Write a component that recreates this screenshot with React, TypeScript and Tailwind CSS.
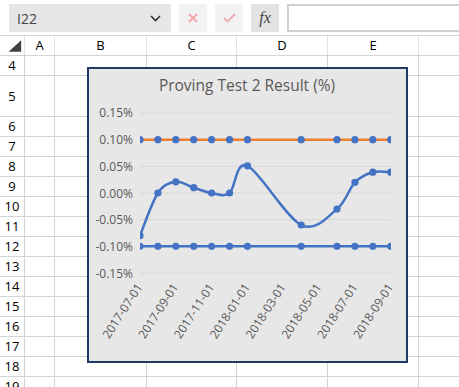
import React from 'react';

const cols = ['', 'A', 'B', 'C', 'D', 'E', ''];
const colW = ['w-[25px]', 'w-[30px]', 'w-[92px]', 'w-[90px]', 'w-[91px]', 'w-[91px]', 'w-[60px]'];
const rows = [4, 5, 6, 7, 8, 9, 10, 11, 12, 13, 14, 15, 16, 17, 18, 19];

// chart coordinates are in page pixels (viewBox is offset to the chart's inner box)
const x0 = 140;
const step = 17.91;
const yOf = (v: number) => 193 - (v / 0.05) * 26.67;
const xOf = (i: number) => x0 + i * step;

const idx = [0, 1, 2, 3, 4, 5, 6, 9, 11, 12, 13, 14];
const vals = [-0.08, 0, 0.021, 0.01, 0, 0, 0.051, -0.06, -0.03, 0.02, 0.039, 0.039];
const pts: [number, number][] = idx.map((i, k) => [xOf(i), yOf(vals[k])]);

const ticks = [0.15, 0.1, 0.05, 0, -0.05, -0.1, -0.15];
const labels = ['2017-07-01', '2017-09-01', '2017-11-01', '2018-01-01', '2018-03-01', '2018-05-01', '2018-07-01', '2018-09-01'];

function smooth(p: [number, number][]) {
  let d = `M${p[0][0]},${p[0][1]}`;
  for (let i = 0; i < p.length - 1; i++) {
    const a = p[i - 1] || p[i];
    const b = p[i];
    const c = p[i + 1];
    const e = p[i + 2] || c;
    const c1x = b[0] + (c[0] - a[0]) / 6;
    const c1y = b[1] + (c[1] - a[1]) / 6;
    const c2x = c[0] - (e[0] - b[0]) / 6;
    const c2y = c[1] - (e[1] - b[1]) / 6;
    d += ` C${c1x},${c1y} ${c2x},${c2y} ${c[0]},${c[1]}`;
  }
  return d;
}

function Chart() {
  const font = '"Open Sans", "Noto Sans", sans-serif';
  return (
    <div className="absolute left-[87px] top-[67px] w-[321px] h-[296px] border-2 border-[#1f3864] bg-[#e7e7e7]">
      <svg width="317" height="292" viewBox="89 69 317 292" style={{ fontFamily: font }}>
        <defs>
          <clipPath id="plot">
            <rect x="140" y="100" width="251" height="190" />
          </clipPath>
        </defs>
        <text x="247" y="91" textAnchor="middle" fontSize="15.5" fill="#595959">
          Proving Test 2 Result (%)
        </text>
        {ticks.map((t) => (
          <g key={t}>
            <line x1="140" x2="391" y1={yOf(t)} y2={yOf(t)} stroke="#d6d6d6" strokeWidth="1" />
            <text x="133" y={yOf(t) + 4.5} textAnchor="end" fontSize="12" fill="#595959">
              {`${t.toFixed(2)}%`}
            </text>
          </g>
        ))}
        <g clipPath="url(#plot)">
          <line x1="140" x2="391" y1={yOf(0.1)} y2={yOf(0.1)} stroke="#ed7d31" strokeWidth="2.5" />
          <line x1="140" x2="391" y1={yOf(-0.1)} y2={yOf(-0.1)} stroke="#4472c4" strokeWidth="2.5" />
          <path d={smooth(pts)} fill="none" stroke="#4472c4" strokeWidth="2.5" strokeLinejoin="round" />
          {idx.map((i) => (
            <g key={i}>
              <circle cx={xOf(i)} cy={yOf(0.1)} r="3.6" fill="#4472c4" />
              <circle cx={xOf(i)} cy={yOf(-0.1)} r="3.6" fill="#4472c4" />
            </g>
          ))}
          {pts.map((p, k) => (
            <circle key={k} cx={p[0]} cy={p[1]} r="3.6" fill="#4472c4" />
          ))}
        </g>
        {labels.map((l, k) => (
          <text
            key={l}
            transform={`translate(${xOf(k * 2) + 3},${287}) rotate(-57)`}
            textAnchor="end"
            fontSize="12"
            fill="#595959"
          >
            {l}
          </text>
        ))}
      </svg>
    </div>
  );
}

export default function App() {
  return (
    <div className="relative w-[459px] h-[387px] overflow-hidden bg-white text-black font-['Open_Sans','Noto_Sans',sans-serif]">
      {/* Formula bar */}
      <div className="h-[36px] flex items-start pt-[4px] border-b border-[#d4d4d4]">
        <div className="ml-[9px] w-[162px] h-[28px] bg-[#e6e6e6] flex items-center justify-between pl-[8px] pr-[10px]">
          <span className="text-[14px] text-[#444]">I22</span>
          <svg width="11" height="7" viewBox="0 0 11 7">
            <path d="M1 1l4.5 4.5L10 1" fill="none" stroke="#333" strokeWidth="1.6" />
          </svg>
        </div>
        <div className="ml-[8px] w-[28px] h-[28px] bg-[#f2f2f2] flex items-center justify-center">
          <svg width="10" height="10" viewBox="0 0 10 10">
            <path d="M1 1l8 8M9 1l-8 8" stroke="#f4a6aa" strokeWidth="1.8" />
          </svg>
        </div>
        <div className="ml-[8px] w-[28px] h-[28px] bg-[#f2f2f2] flex items-center justify-center">
          <svg width="13" height="10" viewBox="0 0 13 10">
            <path d="M1 5l3.5 3.5L12 1" fill="none" stroke="#f0a8ae" strokeWidth="1.8" />
          </svg>
        </div>
        <div className="ml-[8px] w-[28px] h-[28px] bg-[#e3e3e3] flex items-center justify-center">
          <span className="font-['Liberation_Serif',serif] italic text-[16px] text-[#444] leading-none">fx</span>
        </div>
        <div className="ml-[8px] flex-1 h-[28px] border-2 border-r-0 border-[#cfcfcf] bg-white" />
      </div>

      {/* Column headers */}
      <div className="flex h-[20px] border-b border-[#d4d4d4]">
        {cols.map((c, i) => (
          <div
            key={i}
            className={`${colW[i]} shrink-0 border-r border-[#e1e1e1] flex items-center justify-center text-[13px] leading-none`}
          >
            {i === 0 ? (
              <svg width="25" height="19" viewBox="0 0 25 19">
                <path d="M9 16L22 16L22 4Z" fill="#404040" />
              </svg>
            ) : (
              c
            )}
          </div>
        ))}
      </div>

      {/* Rows */}
      {rows.map((r) => (
        <div key={r} className={`flex ${r === 5 ? 'h-[41px]' : 'h-[20px]'}`}>
          {cols.map((_, i) => (
            <div
              key={i}
              className={`${colW[i]} shrink-0 border-r border-b border-[#d4d4d4] ${
                i === 0 ? 'flex items-center justify-center text-[13px] leading-none' : ''
              }`}
            >
              {i === 0 ? r : null}
            </div>
          ))}
        </div>
      ))}

      <Chart />
    </div>
  );
}
